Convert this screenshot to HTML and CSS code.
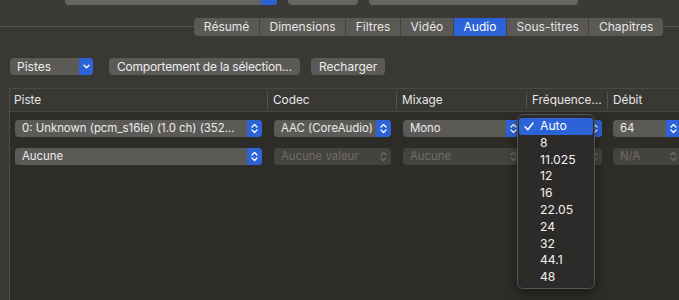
FILE: index.html
```html
<!DOCTYPE html>
<html lang="fr">
<head>
<meta charset="utf-8">
<link rel="stylesheet" href="styles.css">
</head>
<body>
<div class="top">
  <div class="tctl t1"><span class="tblue"></span></div>
  <div class="tctl t2"></div>
  <div class="tctl t3"></div>
</div>
<div class="tabs">
  <div class="seg">
    <span class="tab">Résumé</span>
    <span class="tab">Dimensions</span>
    <span class="tab">Filtres</span>
    <span class="tab">Vidéo</span>
    <span class="tab sel">Audio</span>
    <span class="tab">Sous-titres</span>
    <span class="tab">Chapitres</span>
  </div>
</div>
<div class="box">
  <div class="toolbar">
    <div class="popup pistes"><span class="pval">Pistes</span><span class="arrow"><svg width="7" height="5" viewBox="0 0 7 5"><path d="M1 1.2 L3.5 3.7 L6 1.2" fill="none" stroke="#fff" stroke-width="1.3" stroke-linecap="round" stroke-linejoin="round"/></svg></span></div>
    <div class="btn">Comportement de la sélection…</div>
    <div class="btn">Recharger</div>
  </div>
  <div class="table">
    <div class="thead">
      <div class="th">Piste</div>
      <div class="th">Codec</div>
      <div class="th">Mixage</div>
      <div class="th">Fréquence…</div>
      <div class="th">Débit</div>
    </div>
    <div class="row">
      <div class="cell c1"><div class="popup"><span class="pval">0: Unknown (pcm_s16le) (1.0 ch) (352…</span><span class="arrow"><svg width="7" height="11" viewBox="0 0 7 11"><path d="M1 4 L3.5 1.5 L6 4 M1 7 L3.5 9.5 L6 7" fill="none" stroke="#fff" stroke-width="1.3" stroke-linecap="round" stroke-linejoin="round"/></svg></span></div></div>
      <div class="cell"><div class="popup"><span class="pval">AAC (CoreAudio)</span><span class="arrow"><svg width="7" height="11" viewBox="0 0 7 11"><path d="M1 4 L3.5 1.5 L6 4 M1 7 L3.5 9.5 L6 7" fill="none" stroke="#fff" stroke-width="1.3" stroke-linecap="round" stroke-linejoin="round"/></svg></span></div></div>
      <div class="cell"><div class="popup"><span class="pval">Mono</span><span class="arrow"><svg width="7" height="11" viewBox="0 0 7 11"><path d="M1 4 L3.5 1.5 L6 4 M1 7 L3.5 9.5 L6 7" fill="none" stroke="#fff" stroke-width="1.3" stroke-linecap="round" stroke-linejoin="round"/></svg></span></div></div>
      <div class="cell"><div class="popup"><span class="pval"></span><span class="arrow"><svg width="7" height="11" viewBox="0 0 7 11"><path d="M1 4 L3.5 1.5 L6 4 M1 7 L3.5 9.5 L6 7" fill="none" stroke="#fff" stroke-width="1.3" stroke-linecap="round" stroke-linejoin="round"/></svg></span></div></div>
      <div class="cell c5"><div class="popup"><span class="pval">64</span><span class="arrow"><svg width="7" height="11" viewBox="0 0 7 11"><path d="M1 4 L3.5 1.5 L6 4 M1 7 L3.5 9.5 L6 7" fill="none" stroke="#fff" stroke-width="1.3" stroke-linecap="round" stroke-linejoin="round"/></svg></span></div></div>
    </div>
    <div class="row">
      <div class="cell c1"><div class="popup"><span class="pval">Aucune</span><span class="arrow"><svg width="7" height="11" viewBox="0 0 7 11"><path d="M1 4 L3.5 1.5 L6 4 M1 7 L3.5 9.5 L6 7" fill="none" stroke="#fff" stroke-width="1.3" stroke-linecap="round" stroke-linejoin="round"/></svg></span></div></div>
      <div class="cell"><div class="popup dis"><span class="pval">Aucune valeur</span><span class="arrow"><svg width="7" height="11" viewBox="0 0 7 11"><path d="M1 4 L3.5 1.5 L6 4 M1 7 L3.5 9.5 L6 7" fill="none" stroke="#6c6a66" stroke-width="1.3" stroke-linecap="round" stroke-linejoin="round"/></svg></span></div></div>
      <div class="cell"><div class="popup dis"><span class="pval">Aucune</span><span class="arrow"><svg width="7" height="11" viewBox="0 0 7 11"><path d="M1 4 L3.5 1.5 L6 4 M1 7 L3.5 9.5 L6 7" fill="none" stroke="#6c6a66" stroke-width="1.3" stroke-linecap="round" stroke-linejoin="round"/></svg></span></div></div>
      <div class="cell"><div class="popup dis"><span class="pval"></span><span class="arrow"><svg width="7" height="11" viewBox="0 0 7 11"><path d="M1 4 L3.5 1.5 L6 4 M1 7 L3.5 9.5 L6 7" fill="none" stroke="#6c6a66" stroke-width="1.3" stroke-linecap="round" stroke-linejoin="round"/></svg></span></div></div>
      <div class="cell c5"><div class="popup dis"><span class="pval">N/A</span><span class="arrow"><svg width="7" height="11" viewBox="0 0 7 11"><path d="M1 4 L3.5 1.5 L6 4 M1 7 L3.5 9.5 L6 7" fill="none" stroke="#6c6a66" stroke-width="1.3" stroke-linecap="round" stroke-linejoin="round"/></svg></span></div></div>
    </div>
  </div>
</div>
<div class="menu">
  <div class="item on"><svg class="check" width="10" height="9" viewBox="0 0 10 9"><path d="M1 4.8 L3.8 7.8 L9 1" fill="none" stroke="#fff" stroke-width="1.5" stroke-linecap="round" stroke-linejoin="round"/></svg>Auto</div>
  <div class="item">8</div>
  <div class="item">11.025</div>
  <div class="item">12</div>
  <div class="item">16</div>
  <div class="item">22.05</div>
  <div class="item">24</div>
  <div class="item">32</div>
  <div class="item">44.1</div>
  <div class="item">48</div>
</div>
</body>
</html>
```
FILE: styles.css
```css
html, body {
  margin: 0;
  padding: 0;
}
body {
  width: 679px;
  height: 300px;
  overflow: hidden;
  position: relative;
  background: #3c3a36;
  font-family: Inter, "Noto Sans", sans-serif;
  font-size: 11.4px;
  color: #e6e6e6;
}

/* partially visible controls on top */
.top {
  height: 5px;
  overflow: hidden;
  display: flex;
  align-items: flex-end;
  padding-left: 65px;
  gap: 11px;
}
.tctl {
  flex: none;
  height: 18px;
  border-radius: 4px;
  background: #676561;
  display: flex;
  justify-content: flex-end;
  overflow: hidden;
}
.t1 { width: 212px; }
.t2 { width: 70px; }
.t3 { width: 209px; }
.tblue {
  width: 16px;
  background: #2c64d8;
}

/* tabs */
.tabs {
  display: flex;
  justify-content: flex-end;
  padding-right: 16px;
  margin-top: 13px;
  margin-bottom: -10px;
  position: relative;
  z-index: 1;
}
.seg {
  display: flex;
  height: 18px;
  border-radius: 4px;
  overflow: hidden;
  background: #5b5955;
}
.tab {
  padding: 0 9.6px;
  line-height: 18px;
  font-size: 12px;
  border-left: 1px solid #46443f;
  color: #e6e6e6;
}
.tab:first-child { border-left: 0; }
.tab.sel {
  background: #2c64d8;
  color: #fff;
}

/* box */
.box {
  box-sizing: border-box;
  height: 274px;
  overflow: hidden;
  border-top: 1px solid #54524d;
  background: #3a3834;
  padding-top: 31px;
}
.toolbar {
  display: flex;
  align-items: center;
  gap: 16px;
  padding-left: 10px;
  height: 17px;
}
.popup {
  height: 17px;
  border-radius: 4px;
  background: #5c5a57;
  display: flex;
  align-items: center;
  overflow: hidden;
  color: #ececec;
}
.pval {
  flex: 1;
  min-width: 0;
  padding-left: 7px;
  white-space: nowrap;
  overflow: hidden;
}
.arrow {
  flex: none;
  width: 15px;
  align-self: stretch;
  background: #2c64d8;
  display: flex;
  align-items: center;
  justify-content: center;
}
.pistes { width: 83px; font-size: 12px; }
.pistes .arrow { width: 14px; }
.btn {
  height: 17px;
  line-height: 17px;
  padding: 0 8px;
  border-radius: 4px;
  background: #5c5a57;
  color: #ececec;
  white-space: nowrap;
  font-size: 12px;
  letter-spacing: -0.2px;
}
.toolbar .btn + .btn { margin-left: -5px; letter-spacing: 0; }

/* table */
.table {
  box-sizing: border-box;
  margin-top: 13px;
  margin-left: 9px;
  width: 700px;
  height: 212px;
  border-left: 1px solid #4f4d49;
  border-top: 1px solid #4a4844;
  background: #2e2c29;
}
.thead, .row {
  display: grid;
  grid-template-columns: 257px 129px 130px 81px 90px;
}
.thead {
  height: 22px;
  background: #3a3834;
  border-bottom: 1px solid #494743;
  align-items: center;
  font-size: 11.8px;
}
.th {
  height: 17px;
  line-height: 17px;
  padding-left: 5px;
  border-left: 1px solid #56544f;
  color: #e6e6e6;
  white-space: nowrap;
}
.th:first-child { border-left: 0; padding-left: 4px; }
.row {
  height: 28px;
  align-items: center;
}
.row:nth-child(2) { margin-top: 2px; }
.cell { padding: 0 5px 0 7px; }
.cell.c1 { padding: 0 5px 0 5px; }
.cell.c5 { padding: 0 0 0 6px; width: 68px; }

.popup.dis {
  background: #45433f;
  color: #6f6d69;
}
.popup.dis .arrow { background: transparent; }

/* popup menu */
.menu {
  position: absolute;
  left: 517px;
  top: 114px;
  width: 76px;
  padding: 3px 0 2px;
  background: #2c2b29;
  border: 1px solid #56544f;
  border-radius: 6px;
  box-shadow: 0 4px 12px rgba(0,0,0,0.45);
  z-index: 5;
}
.item {
  position: relative;
  height: 16.8px;
  line-height: 16.8px;
  padding-left: 21px;
  margin: 0 1px;
  border-radius: 3px;
  font-size: 12.2px;
  color: #f2f2f2;
}
.item.on { background: #2c64d8; color: #fff; }
.check {
  position: absolute;
  left: 5px;
  top: 4px;
}
```
